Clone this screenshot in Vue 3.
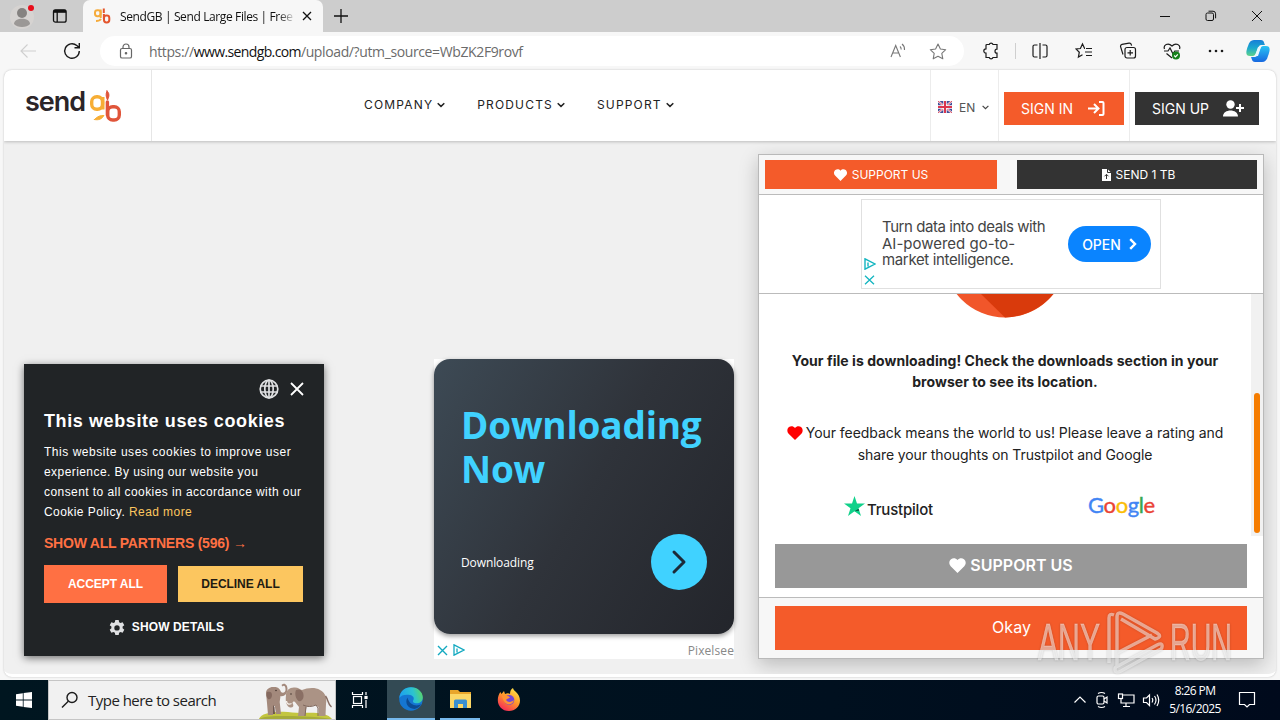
<template>
  <div class="desktop">
    <div class="titlebar">
      <div class="profile">
        <svg width="34" height="32" viewBox="0 0 34 32">
          <circle cx="16" cy="17" r="12" fill="#d6d3d1" />
          <circle cx="16" cy="13" r="5" fill="#858280" />
          <path d="M8 24c0-7 16-7 16 0-3 4-13 4-16 0z" fill="#9b9896" />
          <circle cx="25" cy="8" r="3" fill="#e80d1b" />
        </svg>
      </div>
      <svg class="tab-actions" width="16" height="16" viewBox="0 0 16 16" fill="none" stroke="#111" stroke-width="1.3">
        <rect x="1.5" y="1.8" width="12.6" height="12.4" rx="2" />
        <path d="M1.5 3.3h12.6" stroke-width="3" />
        <path d="M5.2 4v10" />
      </svg>
      <div class="tab">
        <svg width="20" height="18" viewBox="0 0 20 18" fill="none" stroke-width="2">
          <rect x="3" y="3.2" width="5.500" height="6" rx="2.400" stroke="#f5ab3c" />
          <path d="M8.700 2.500V11M4 14c2.500 0 4-.5 5-2" stroke="#f5ab3c" />
          <rect x="12" y="8.600" width="5.300" height="6.800" rx="2.400" stroke="#e4552d" />
          <path d="M11.800 1.500v4.400M11.900 7v5" stroke="#e4552d" />
        </svg>
        <span class="tab-title">SendGB | Send Large Files | Free fi</span>
        <svg class="tab-close" width="10" height="10" viewBox="0 0 10 10" stroke="#111" stroke-width="1.3"><path d="M1 1l8 8M9 1L1 9" /></svg>
      </div>
      <svg class="new-tab" width="14" height="14" viewBox="0 0 14 14" stroke="#111" stroke-width="1.3"><path d="M7 0v14M0 7h14" /></svg>
      <div class="window-buttons">
        <svg width="12" height="12" viewBox="0 0 12 12" fill="none" stroke="#111"><path d="M1 6.5h10" /></svg>
        <svg width="12" height="12" viewBox="0 0 12 12" fill="none" stroke="#111"><rect x="1" y="3" width="7.5" height="7.5" rx="1.5" /><path d="M3.5 1.2H8a2.6 2.6 0 0 1 2.6 2.6v4.5" /></svg>
        <svg width="12" height="12" viewBox="0 0 12 12" fill="none" stroke="#111"><path d="M1 1l10 10M11 1L1 11" /></svg>
      </div>
    </div>

    <div class="toolbar">
      <svg class="back" width="18" height="16" viewBox="0 0 18 16" fill="none" stroke="#cfcfcf" stroke-width="1.1"><path d="M17 8H2M8.5 1.5L2 8l6.5 6.5" /></svg>
      <svg class="reload" width="18" height="18" viewBox="0 0 18 18" fill="none" stroke="#1b1b1b" stroke-width="1.4"><path d="M16.3 9a7.3 7.3 0 1 1-2.5-5.5l2.3 2M16.3 1v4.7h-4.8" /></svg>
      <div class="address">
        <svg class="lock" width="14" height="16" viewBox="0 0 14 16" fill="none" stroke="#666" stroke-width="1.2">
          <rect x="1.5" y="5.5" width="11" height="9.5" rx="1.6" />
          <path d="M4 5.5V4a3 3 0 0 1 6 0v1.5" />
          <circle cx="7" cy="10.2" r=".7" fill="#666" />
        </svg>
        <span class="url">https://<b>www.sendgb.com</b>/upload/?utm_source=WbZK2F9rovf</span>
        <svg class="read-aloud" width="17" height="16" viewBox="0 0 17 16" fill="none" stroke="#777" stroke-width="1.1"><path d="M1 14L5.7 2.5 10.4 14M2.7 10h6M10 3.500c1 .9 1.200 1.800 1.200 3M12 1c2 1.500 2.700 3.500 2.500 6" /></svg>
        <svg class="fav" width="18" height="17" viewBox="0 0 18 17" fill="none" stroke="#777" stroke-width="1.1" stroke-linejoin="round"><path d="M9 1l2.400 5 5.300.7-3.900 3.700 1 5.400L9 13.200l-4.800 2.600 1-5.400L1.300 6.700 6.600 6z" /></svg>
      </div>
      <div class="tool-icons">
        <svg width="18" height="18" viewBox="0 0 18 18"><path d="M5 2.500h2.200a2 2 0 0 1 3.800 0H15v4.700a2 2 0 1 0 0 4v4.300h-4a2 2 0 0 1-3.800 0H4v-4.300a2.200 2.200 0 0 1 0-4.400V3.500q0-1 1-1z" /></svg>
        <i class="tool-divider"></i>
        <svg width="18" height="18" viewBox="0 0 18 18"><path d="M9 1v16M6.500 3H3.500A1.500 1.500 0 0 0 2 4.500v9A1.500 1.500 0 0 0 3.500 15h3M11.500 3h3A1.500 1.500 0 0 1 16 4.500v9a1.500 1.500 0 0 1-1.500 1.500h-3" /></svg>
        <svg width="18" height="18" viewBox="0 0 18 18"><path d="M10 6.500H9.600L7.500 2 5.400 6.500 1 7l3.300 3.200-.9 4.900 4.100-2.300M11 6.500h6M10 10h7M11 13.500h6" /></svg>
        <svg width="18" height="18" viewBox="0 0 18 18"><rect x="6" y="5.500" width="10.500" height="10.500" rx="2" /><path d="M11.200 8v5.500M8.500 10.800H14M4 12.500l-2.500-8A2 2 0 0 1 3 2.400l7-1.300a2 2 0 0 1 2.300 1.500l.3 1" /></svg>
        <svg width="18" height="18" viewBox="0 0 18 18">
          <path d="M1.500 7C0 3 5 0 9 4c4-4 9-1 7.500 3M1 9h4l2-3 3 6 1.800-3H16M3.500 11.500L9 16" />
          <circle cx="13" cy="13.500" r="4" fill="#16811b" stroke="none" />
          <path d="M11.200 13.500l1.300 1.300 2.300-2.500" stroke="#fff" />
        </svg>
        <svg width="18" height="18" viewBox="0 0 18 18"><g fill="#1b1b1b" stroke="none"><circle cx="3" cy="9" r="1.300" /><circle cx="9" cy="9" r="1.300" /><circle cx="15" cy="9" r="1.300" /></g></svg>
      </div>
      <svg class="copilot" width="26" height="24" viewBox="0 0 26 24">
        <defs>
          <linearGradient id="cp1" x1="0" y1="0" x2="0" y2="1"><stop offset="0" stop-color="#187ed8" /><stop offset=".5" stop-color="#1ba8ce" /><stop offset="1" stop-color="#5fd38a" /></linearGradient>
          <linearGradient id="cp2" x1="0" y1="0" x2="0" y2="1"><stop offset="0" stop-color="#28c4f4" /><stop offset="1" stop-color="#1768e0" /></linearGradient>
        </defs>
        <path d="M9 1h7c3 0 3 3 4 5h-4c-4 0-4 11-8 11H5c-5 0-4-5-2-10C4 3 6 1 9 1z" fill="url(#cp1)" />
        <path d="M17 23h-7c-3 0-3-3-4-5h4c4 0 4-11 8-11h3c5 0 4 5 2 10-1 4-3 6-6 6z" fill="url(#cp2)" />
        <path d="M13 8h3l-3 9h-3z" fill="#e9f8ff" />
      </svg>
    </div>

    <div class="page">
      <header class="site-nav">
        <div class="logo">
          <span>send</span>
          <svg width="34" height="36" viewBox="0 0 34 36" fill="none" stroke-width="3.400" stroke-linecap="round">
            <rect x="3.700" y="8.700" width="10.800" height="12.600" rx="5" stroke="#f7ae35" />
            <path d="M14.800 9v12.500" stroke="#f7ae35" stroke-linecap="butt" />
            <path d="M6.500 31.500c4 1 7.500-.5 9.500-4-3-.5-7 1-9.500 4z" fill="#f7ae35" stroke="#f7ae35" stroke-width="1" />
            <rect x="19.700" y="18.700" width="11.600" height="13.300" rx="5" stroke="#e0553a" />
            <path d="M19.400 14v13" stroke="#e0553a" />
            <path d="M19 3c2.500 2 2.500 5 .5 9-1.500-3-2-6-.5-9z" fill="#e0553a" stroke="#e0553a" stroke-width="1" />
          </svg>
        </div>
        <nav class="menu">
          <a v-for="item in menu" :key="item">
            <span>{{ item }}</span>
            <svg width="8" height="6" viewBox="0 0 8 6" fill="none" stroke="#222" stroke-width="1.500"><path d="M.7 1.200L4 4.400l3.300-3.200" /></svg>
          </a>
        </nav>
        <div class="lang">
          <svg class="flag" width="14" height="12" viewBox="0 0 14 12">
            <rect width="14" height="12" fill="#2d3a8c" />
            <path d="M0 0l14 12M14 0L0 12" stroke="#fff" stroke-width="2" />
            <path d="M0 0l14 12M14 0L0 12" stroke="#d8203a" stroke-width=".9" />
            <path d="M7 0v12M0 6h14" stroke="#fff" stroke-width="3.400" />
            <path d="M7 0v12M0 6h14" stroke="#d8203a" stroke-width="2" />
          </svg>
          <span>EN</span>
          <svg class="lang-caret" width="7" height="5" viewBox="0 0 7 5" fill="none" stroke="#444" stroke-width="1.200"><path d="M.6.900l2.900 2.800L6.400.9" /></svg>
        </div>
        <div class="sign in">
          <a><span>SIGN IN</span>
            <svg width="17" height="15" viewBox="0 0 17 15" fill="none" stroke="#fff" stroke-width="2"><path d="M0 7.500h10M6 3l4.500 4.500L6 12M11 1h3.500a1 1 0 0 1 1 1v11a1 1 0 0 1-1 1H11" /></svg>
          </a>
        </div>
        <div class="sign up">
          <a><span>SIGN UP</span>
            <svg width="21" height="17" viewBox="0 0 21 17" fill="#fff"><circle cx="7.500" cy="4.500" r="4.200" /><path d="M0 16.500c0-8 15-8 15 0zM16 4h2v3h3v2h-3v3h-2V9h-3V7h3z" /></svg>
          </a>
        </div>
      </header>

      <main class="stage">
        <section class="cookies">
          <div class="cookie-top">
            <svg width="20" height="20" viewBox="0 0 20 20" fill="none" stroke="#dfe0e2" stroke-width="1.700"><circle cx="10" cy="10" r="8.800" /><ellipse cx="10" cy="10" rx="4.200" ry="8.800" /><path d="M10 1v18M1.500 7h17M1.500 13h17" /></svg>
            <svg width="14" height="14" viewBox="0 0 14 14" stroke="#fff" stroke-width="1.800"><path d="M1 1l12 12M13 1L1 13" /></svg>
          </div>
          <h2>This website uses cookies</h2>
          <p>
            <span class="first">This website uses cookies to improve user</span><br />
            <span>experience. By using our website you</span><br />
            <span>consent to all cookies in accordance with our</span><br />
            <span>Cookie Policy. <a>Read more</a></span>
          </p>
          <div class="partners">SHOW ALL PARTNERS (596) <i>→</i></div>
          <div class="cookie-buttons">
            <button class="accept">ACCEPT ALL</button>
            <button class="decline">DECLINE ALL</button>
          </div>
          <div class="details">
            <svg width="16" height="16" viewBox="0 0 16 16" fill="#dfe0e2" fill-rule="evenodd"><path d="M6.300 0h3.400l.4 2.200 1.400.8 2.100-.8 1.700 3-1.700 1.400v1.700l1.700 1.500-1.700 2.900-2.100-.8-1.400.9-.4 2.200H6.300l-.4-2.200-1.400-.9-2.100.8-1.700-2.900 1.700-1.500V6.600L.7 5.200l1.700-3 2.100.8 1.400-.8zM8 5.200a2.700 2.700 0 1 0 0 5.400 2.700 2.700 0 0 0 0-5.400z" /></svg>
            <span>SHOW DETAILS</span>
          </div>
        </section>

        <section class="promo">
          <div class="promo-card">
            <h1>Downloading<br />Now</h1>
            <div class="promo-row">
              <span>Downloading</span>
              <div class="round">
                <svg width="16" height="26" viewBox="0 0 16 26" fill="none" stroke="#1c2a38" stroke-width="3" stroke-linecap="round" stroke-linejoin="round"><path d="M3 3l10 10L3 23" /></svg>
              </div>
            </div>
          </div>
          <div class="promo-foot">
            <svg width="11" height="11" viewBox="0 0 11 11" stroke="#13a9c0" stroke-width="1.400"><path d="M1 1l9 9M10 1l-9 9" /></svg>
            <svg width="12" height="12" viewBox="0 0 12 12" fill="none" stroke="#13a9c0" stroke-width="1.300"><path d="M1 .8v10.400L11 6zM4 4.500v4" /></svg>
            <span>Pixelsee</span>
          </div>
        </section>

        <section class="modal">
          <div class="modal-head">
            <button class="orange">
              <svg width="13" height="12" viewBox="0 0 24 22" fill="#fff"><path :d="heart" /></svg>
              <span>SUPPORT US</span>
            </button>
            <button class="dark">
              <svg width="9" height="12" viewBox="0 0 9 12"><path d="M0 0h5.500L9 3.500V12H0z" fill="#fff" /><path d="M5.500 0v3.500H9M4.500 10V5.500M2.500 7.300l2-2 2 2" stroke="#333" fill="none" /></svg>
              <span>SEND 1 TB</span>
            </button>
          </div>
          <div class="modal-ad">
            <div class="banner">
              <div class="ad-marks">
                <svg width="12" height="12" viewBox="0 0 12 12" fill="none" stroke="#13b5c0" stroke-width="1.400"><path d="M1 .8v10.400L11 6zM4 4.500v4" /></svg>
                <svg width="11" height="10" viewBox="0 0 11 10" stroke="#13b5c0" stroke-width="1.300"><path d="M1 .8l9 8.500M10 .8L1 9.300" /></svg>
              </div>
              <p><span class="tight">Turn data into deals with</span><br /><span class="loose">AI-powered go-to-</span><br /><span>market intelligence.</span></p>
              <div class="open">
                <span>OPEN</span>
                <svg width="8" height="12" viewBox="0 0 8 12" fill="none" stroke="#fff" stroke-width="2.400"><path d="M1.200 1.200L6 6l-4.800 4.800" /></svg>
              </div>
            </div>
          </div>
          <div class="modal-body">
            <div class="scroll-content">
              <svg class="disc" width="124" height="24" viewBox="0 0 124 24">
                <circle cx="62" cy="-38" r="61.500" fill="#f1562a" />
                <path d="M38 0h72.500Q92 22 62 23.500z" fill="#d93a0c" />
              </svg>
              <p class="strong"><span>Your file is downloading! Check the downloads section in your</span><br /><span>browser to see its location.</span></p>
              <p class="feedback">
                <svg width="16" height="14" viewBox="0 0 24 22" fill="#f00"><path :d="heart" /></svg>
                <span>Your feedback means the world to us! Please leave a rating and</span><br /><span class="second">share your thoughts on Trustpilot and Google</span>
              </p>
              <div class="reviews">
                <div class="trustpilot">
                  <svg width="21" height="20" viewBox="0 0 21 20"><path d="M10.500 0L13 7.500h8l-6.500 4.700L17 20l-6.500-4.800L4 20l2.500-7.800L0 7.500h8z" fill="#10d18a" /><path d="M14.500 12.800l.7 2-4.700.4z" fill="#0a5a43" /></svg>
                  <span>Trustpilot</span>
                </div>
                <div class="google"><span v-for="(l, i) in google" :key="i" :class="l.tone">{{ l.ch }}</span></div>
              </div>
            </div>
            <div class="track"><div class="thumb"></div></div>
          </div>
          <div class="modal-support">
            <button>
              <svg width="17" height="15" viewBox="0 0 24 22" fill="#fff"><path :d="heart" /></svg>
              <span>SUPPORT US</span>
            </button>
          </div>
          <div class="modal-foot"><button>Okay</button></div>
        </section>
      </main>
    </div>

    <footer class="taskbar">
      <div class="start">
        <svg width="16" height="16" viewBox="0 0 16 16" fill="#fff"><path d="M0 2.200l6.800-1v6.400H0zM7.600 1.100L16 0v7.600H7.600zM0 8.400h6.800v6.400l-6.800-1zM7.600 8.400H16V16l-8.400-1.100z" /></svg>
      </div>
      <div class="search">
        <svg width="18" height="18" viewBox="0 0 18 18" fill="none" stroke="#1b1b1b" stroke-width="1.400"><circle cx="11" cy="6.500" r="5" /><path d="M7.300 10.200L1 16.500" /></svg>
        <span>Type here to search</span>
        <svg class="elephants" width="78" height="38" viewBox="0 0 78 38">
          <path d="M2 38c2-5 10-7 20-7 8-1 14 1 22 1 14-1 27 0 31 6z" fill="#c3c640" />
          <path d="M2 38c6-3 14-3 24-3s30 0 49 3z" fill="#a5ab3a" />
          <path d="M9 12c0-4 4-6.500 8-6 4-.3 6 2 7 5 2 2 5 0 4.500-3C28.300 5 27 4 25.500 5.500L24.500 4c3-3 6 0 6 4 0 5-3.500 8-7 7l-.8 6 1.300 12h-5l-1.200-8h-1.300l-.5 9h-5L10 22z" fill="#a3897c" />
          <path d="M10 11c3-1 5 0 5 3 0 3-2 5-4 4-2-2-2-5-1-7z" fill="#84695f" />
          <path d="M16 24l1.500 2 .5 7h-2z" fill="#6d574f" />
          <path d="M29 14c0-5 4-8 9-7.500 3 0 5 2 7 2.500 5-2 13-3 18 0 6 3 7 9 6 14l-.5 12H62l-.5-9-3-2c-3 1-6 2-9 1.500L48 35h-7l1-9-4-5c-2-1-3 0-2 2 1 2 0 4-3 3.500-3-1-5-5-4-12.500z" fill="#ab9385" />
          <path d="M39 9c5-2 8 2 7.500 7-.5 3-3 5-5 4-3-2-4-8-2.500-11z" fill="#8a6f64" />
          <path d="M46 24c4 2 9 2 13 0l2 3v8M49 26l-1 9" stroke="#80685d" stroke-width="1" fill="none" />
          <path d="M68.500 15c3 4 2 8 6 11" stroke="#84695f" stroke-width="1.400" fill="none" />
          <path d="M29.500 20c0 3 2.500 4 5 2.500" stroke="#f6f1ec" stroke-width="1.300" fill="none" />
          <circle cx="19" cy="9.500" r=".7" fill="#33241f" />
          <circle cx="34" cy="13" r=".7" fill="#33241f" />
        </svg>
      </div>
      <div class="task view">
        <svg width="18" height="18" viewBox="0 0 18 18" fill="none" stroke="#fff" stroke-width="1.200"><rect x="2.500" y="5.500" width="8" height="7" /><path d="M1.500 1v2.500h10V1M1.500 17v-2.500h10V17M15 1v3M15 9v8" /><rect x="14" y="5.500" width="2" height="2" fill="#fff" /></svg>
      </div>
      <div class="task active">
        <svg width="24" height="24" viewBox="0 0 24 24">
          <defs>
            <linearGradient id="eg" x1="0" y1=".5" x2="1" y2=".3"><stop offset="0" stop-color="#1c9ff0" /><stop offset=".6" stop-color="#2cc3d0" /><stop offset="1" stop-color="#5cd662" /></linearGradient>
          </defs>
          <circle cx="12" cy="12" r="11.800" fill="#1576d2" />
          <path d="M.3 11C1 4 6 .2 12 .2c7 0 11.800 5 11.800 10 0 4-3 6-6 6-3.500 0-4.500-1.500-3.500-3 .8-1.200 1-4-3-5.200C6.500 7 2 8 .3 11z" fill="url(#eg)" />
          <path d="M8.500 10.500c-3 5 0 11 7 11.500 3-.5 5.500-2.500 6.800-4.700-5 2.500-12 1-13.800-6.800z" fill="#0c4b93" />
        </svg>
      </div>
      <div class="task open-app">
        <svg width="23" height="20" viewBox="0 0 23 20"><path d="M1 1h8l2 2h11v16H1z" fill="#e9a62b" /><path d="M1 5h21v14H1z" fill="#fcd766" /><path d="M5 19v-7q0-1.500 1.500-1.500h10q1.500 0 1.500 1.500v7h-4v-4H9v4z" fill="#3a8fd0" /></svg>
      </div>
      <div class="task">
        <svg width="24" height="24" viewBox="0 0 24 24">
          <defs><linearGradient id="ff" x1=".8" y1="0" x2=".2" y2="1"><stop offset="0" stop-color="#ffe64a" /><stop offset=".45" stop-color="#ff9a2a" /><stop offset="1" stop-color="#f5215b" /></linearGradient></defs>
          <path d="M12 23C5 23 .8 18 .8 12c0-3 1-6 2.500-8L4.500 6 7 3l1 3c2-1 4-1 5 0 0-3 1-5 3-6 0 3 7 5 7 12.500C23 18.500 18 23 12 23z" fill="url(#ff)" />
          <circle cx="12.300" cy="12" r="5" fill="#7446d5" />
          <path d="M5 8c3-1 7-.5 8 2-2 0-3 1-4 2 2 3 6 2 8 0-1 6-10 7-12-4z" fill="#ff9334" />
        </svg>
      </div>
      <div class="tray">
        <svg width="14" height="20" viewBox="0 0 14 20"><path d="M1.500 12.500L7 7l5.500 5.500" /></svg>
        <svg width="16" height="20" viewBox="0 0 14 20"><rect x="2" y="6" width="7" height="8" rx="1.500" /><path d="M9 9l3-2v6l-3-2M3 3.500q3.500-2 7 0M3 16.500q3.500 2 7 0" /></svg>
        <svg width="18" height="20" viewBox="0 0 18 20"><path d="M6 5h11v8H4V9M9 13v3M6 16.500h7" /><rect x="1.500" y="4" width="4" height="4.500" /></svg>
        <svg width="18" height="20" viewBox="0 0 18 20"><path d="M1.500 8v4.500h3l3 3V5l-3 3zM10 8q1.500 2 0 4.500M12.500 6q3 4 0 8.500M15 4.500q3.500 5.500 0 11.500" /></svg>
        <div class="clock"><span>8:26 PM</span><span>5/16/2025</span></div>
        <svg class="notice" width="18" height="20" viewBox="0 0 18 20"><path d="M1.500 2.500h15v12h-5L9 17l-2.500-2.500h-5z" /></svg>
      </div>
    </footer>

    <svg class="watermark" width="200" height="68" viewBox="0 0 200 68">
      <g class="wm-text">
        <text x="4" y="52" textLength="62" lengthAdjust="spacingAndGlyphs">ANY</text>
        <text x="136" y="52" textLength="62" lengthAdjust="spacingAndGlyphs">RUN</text>
      </g>
      <g class="wm-mark">
        <path d="M80 7q-5-2-5 3v45" />
        <path d="M83 59V9q0-6 6-3l34 19q6 4-2 6L87 11M83 45l35-18M87 63q-6 3-6-2 0-2 3-3l39-21q6-3 5 2 0 2-3 3z" />
      </g>
    </svg>
  </div>
</template>

<script setup>
const menu = ['COMPANY', 'PRODUCTS', 'SUPPORT']

const google = [
  { ch: 'G', tone: 'blue' },
  { ch: 'o', tone: 'red' },
  { ch: 'o', tone: 'yellow' },
  { ch: 'g', tone: 'blue' },
  { ch: 'l', tone: 'green' },
  { ch: 'e', tone: 'red' }
]

const heart = 'M12 22L2 12C-1 9-.5 4 2.500 1.700 5.500-.5 9.500 0 12 3c2.500-3 6.500-3.500 9.500-1.300C24.500 4 25 9 22 12z'
</script>

<style>
body {
  overflow: hidden;
}
</style>

<style scoped>
.desktop {
  position: relative;
  width: 1280px;
  height: 720px;
  display: flex;
  flex-direction: column;
  overflow: hidden;
  background: #f7f7f7;
  font-family: Inter, sans-serif;
  color: #222;
}

.desktop *,
.desktop {
  box-sizing: border-box;
}

svg {
  flex: none;
  display: block;
}

button {
  border: 0;
  padding: 0;
  font-family: inherit;
  display: flex;
  align-items: center;
  justify-content: center;
  white-space: nowrap;
}

p,
h1,
h2 {
  margin: 0;
  white-space: nowrap;
}

/* browser chrome */
.titlebar {
  flex: none;
  height: 32px;
  display: flex;
  align-items: center;
  background: #cdcdcd;
}

.profile {
  width: 52px;
  padding-left: 6px;
}

.tab-actions {
  margin-right: 15px;
}

.tab {
  width: 240px;
  height: 32px;
  display: flex;
  align-items: center;
  padding: 0 11px 0 9px;
  background: #f7f7f7;
  border-radius: 7px 7px 0 0;
}

.tab-title {
  width: 176px;
  margin-left: 8px;
  overflow: hidden;
  white-space: nowrap;
  font: 12px 'Open Sans', sans-serif;
  letter-spacing: -0.38px;
  color: #111;
  -webkit-mask-image: linear-gradient(90deg, #000 90%, transparent);
  mask-image: linear-gradient(90deg, #000 90%, transparent);
}

.tab-close {
  margin-left: 6px;
}

.new-tab {
  margin-left: 11px;
}

.window-buttons {
  margin-left: auto;
  display: flex;
  gap: 34px;
  padding-right: 17px;
}

.toolbar {
  flex: none;
  height: 38px;
  display: flex;
  align-items: center;
}

.back {
  margin-left: 19px;
}

.reload {
  margin-left: 26px;
}

.address {
  width: 864px;
  height: 30px;
  margin-left: 19px;
  display: flex;
  align-items: center;
  padding: 0 17px 0 19px;
  border-radius: 15px;
  background: #fff;
}

.url {
  margin-left: 16px;
  font: 14px 'Open Sans', sans-serif;
  letter-spacing: -0.38px;
  color: #6b6b6b;
}

.url b {
  font-weight: 400;
  letter-spacing: -0.62px;
  color: #111;
}

.read-aloud {
  margin-left: auto;
  margin-right: 22px;
}

.tool-icons {
  margin-left: 18px;
  display: flex;
  align-items: center;
  gap: 26px;
}

.tool-icons svg {
  fill: none;
  stroke: #1b1b1b;
  stroke-width: 1.2;
}

.tool-divider {
  width: 1px;
  height: 16px;
  margin: 0 -11px;
  background: #cfcfcf;
}

.copilot {
  margin-left: 20px;
}

.page {
  flex: none;
  width: 1272px;
  height: 607px;
  margin-left: 4px;
  display: flex;
  flex-direction: column;
  overflow: hidden;
  background: #f0f0f0;
  border-radius: 8px;
  border-bottom: 3px solid #fff;
  box-shadow: 0 0 2px #bbb;
}

/* site navigation */
.site-nav {
  flex: none;
  height: 71px;
  display: flex;
  background: #fff;
  box-shadow: 0 1px 3px rgba(0, 0, 0, 0.22);
}

.logo {
  width: 148px;
  display: flex;
  align-items: center;
  padding-left: 21px;
  border-right: 1px solid #e6e6e6;
}

.logo span {
  width: 63px;
  margin-top: -8px;
  font: 600 27px Inter, sans-serif;
  letter-spacing: -1px;
  color: #2b2528;
}

.menu {
  flex: 1;
  display: flex;
  justify-content: flex-start;
  gap: 32px;
  padding: 28px 0 0 212px;
  font-size: 12px;
  line-height: 14px;
}

.menu a {
  display: flex;
  gap: 4px;
  letter-spacing: 1.17px;
}

.menu svg {
  margin-top: 4px;
}

.lang {
  width: 69px;
  display: flex;
  align-items: center;
  gap: 7px;
  padding: 4px 0 0 7px;
  border-left: 1px solid #ececec;
  border-right: 1px solid #ececec;
  font-size: 12px;
  color: #555;
}

.flag {
  margin-top: -2px;
  opacity: 0.9;
}

.sign {
  width: 131px;
  padding: 22px 0 0 5px;
  border-right: 1px solid #ececec;
}

.sign.up {
  width: 146px;
  border: 0;
}

.sign a {
  width: 120px;
  height: 33px;
  display: flex;
  align-items: center;
  justify-content: space-between;
  padding: 0 19px 0 17px;
  background: #f45b2a;
  color: #fff;
  font-size: 14px;
}

.sign.up a {
  width: 124px;
  padding: 0 15px 0 17px;
  background: #333;
}

/* cookie panel */
.stage {
  flex: 1;
  display: flex;
  align-items: flex-start;
}

.cookies {
  width: 300px;
  height: 292px;
  margin: 223px 0 0 20px;
  padding: 15px 20px 0;
  background: #212426;
  box-shadow: 0 2px 8px rgba(0, 0, 0, 0.55);
  font-family: 'Liberation Sans', Arial, sans-serif;
  color: #fff;
}

.cookie-top {
  height: 20px;
  display: flex;
  align-items: center;
  justify-content: flex-end;
  gap: 11px;
}

.cookies h2 {
  margin-top: 11px;
  font-size: 18px;
  line-height: 22px;
  letter-spacing: 0.6px;
}

.cookies p {
  margin-top: 10px;
  font-size: 12px;
  line-height: 20px;
  letter-spacing: 0.43px;
}

.cookies p .first {
  letter-spacing: 0.53px;
}

.cookies p a {
  color: #fcc65f;
}

.partners {
  margin-top: 11px;
  font-size: 14px;
  font-weight: 700;
  line-height: 20px;
  letter-spacing: -0.22px;
  white-space: nowrap;
  color: #ff7043;
}

.partners i {
  font-style: normal;
  font-weight: 400;
}

.cookie-buttons {
  margin-top: 12px;
  display: flex;
  align-items: center;
  gap: 11px;
}

.cookie-buttons button {
  font-size: 12px;
  font-weight: 700;
  letter-spacing: -0.05px;
}

.accept {
  width: 123px;
  height: 38px;
  background: #ff7043;
  color: #fff;
}

.decline {
  width: 125px;
  height: 36px;
  background: #fcc65f;
  color: #221b12;
}

.details {
  margin-top: 15px;
  display: flex;
  align-items: center;
  justify-content: center;
  gap: 7px;
  padding: 1px 15px 0 0;
  font-size: 12px;
  font-weight: 700;
  letter-spacing: 0.1px;
  line-height: 17px;
}

/* middle ad */
.promo {
  width: 300px;
  height: 300px;
  margin: 218px 0 0 110px;
  background: #fff;
}

.promo-card {
  height: 275px;
  padding: 44px 27px 0;
  border-radius: 16px;
  background: linear-gradient(120deg, #3d4a55 0%, #2f333a 50%, #23252b 100%);
  box-shadow: 0 2px 5px rgba(0, 0, 0, 0.4);
  font-family: 'Open Sans', sans-serif;
  color: #fff;
}

.promo h1 {
  font-size: 37px;
  line-height: 44px;
  letter-spacing: -0.2px;
  color: #40d2ff;
}

.promo-row {
  margin-top: 43px;
  display: flex;
  align-items: center;
  justify-content: space-between;
  font-size: 12px;
  letter-spacing: -0.1px;
}

.round {
  width: 56px;
  height: 56px;
  display: flex;
  align-items: center;
  justify-content: center;
  border-radius: 50%;
  background: #40d2ff;
}

.promo-foot {
  height: 25px;
  display: flex;
  align-items: center;
  gap: 5px;
  padding: 7px 0 0 3px;
  font: 12px 'Open Sans', sans-serif;
  letter-spacing: 0.1px;
  color: #888;
}

.promo-foot span {
  margin-left: auto;
}

/* download dialog */
.modal {
  width: 506px;
  height: 505px;
  margin: 13px 0 0 24px;
  display: flex;
  flex-direction: column;
  border: 1px solid #b9b9b9;
  background: #fff;
  box-shadow: 0 6px 18px rgba(0, 0, 0, 0.22);
}

.modal-head {
  height: 40px;
  display: flex;
  gap: 20px;
  padding: 5px 6px;
  background: #f7f7f7;
  border-bottom: 1px solid #bbb;
}

.modal-head button {
  height: 29px;
  gap: 5px;
  font-size: 12px;
  color: #fff;
}

.modal-head .orange {
  width: 232px;
  background: #f45b2a;
}

.modal-head .dark {
  width: 240px;
  padding-left: 3px;
  background: #333;
}

.modal-ad {
  height: 99px;
  display: flex;
  justify-content: center;
  padding-top: 4px;
  border-bottom: 1px solid #bbb;
}

.banner {
  width: 300px;
  height: 90px;
  display: flex;
  align-items: center;
  border: 1px solid #e0e0e0;
}

.ad-marks {
  width: 20px;
  align-self: flex-end;
  display: flex;
  flex-direction: column;
  gap: 5px;
  padding: 0 0 3px 2px;
}

.banner p {
  width: 186px;
  font-size: 15px;
  line-height: 16.5px;
  letter-spacing: -0.35px;
  color: #444;
}

.banner .tight {
  letter-spacing: -0.44px;
}

.banner .loose {
  letter-spacing: 0;
}

.open {
  width: 83px;
  height: 36px;
  display: flex;
  align-items: center;
  justify-content: center;
  gap: 8px;
  border-radius: 18px;
  background: #0a84ff;
  color: #fff;
  font-size: 14px;
  font-weight: 500;
}

.modal-body {
  height: 242px;
  display: flex;
}

.scroll-content {
  flex: 1;
  display: flex;
  flex-direction: column;
  align-items: center;
  text-align: center;
}

.track {
  width: 12px;
  padding: 99px 3px 3px;
  background: #f1f1f1;
}

.thumb {
  height: 140px;
  border-radius: 3px;
  background: #f57c00;
}

.strong {
  margin-top: 32px;
  font-size: 14px;
  font-weight: 700;
  line-height: 21px;
  letter-spacing: 0.05px;
}

.feedback {
  margin-top: 30px;
  font-size: 14px;
  line-height: 22px;
  letter-spacing: -0.04px;
}

.feedback .second {
  letter-spacing: -0.1px;
}

.feedback svg {
  display: inline-block;
  margin-right: 3px;
  vertical-align: -2px;
}

.reviews {
  width: 100%;
  display: flex;
  align-items: flex-start;
  padding: 30px 0 0 85px;
}

.trustpilot {
  width: 244px;
  display: flex;
  gap: 2px;
  font: 500 15px Inter, sans-serif;
  letter-spacing: -0.2px;
}

.trustpilot span {
  padding-top: 4px;
}

.google {
  margin-top: -3px;
  font: 22px/24px Lato, sans-serif;
  letter-spacing: -0.4px;
  -webkit-text-stroke: 0.4px;
}

.blue {
  color: #4285f4;
}

.red {
  color: #ea4335;
}

.yellow {
  color: #fbbc05;
}

.green {
  color: #34a853;
}

.modal-support {
  height: 62px;
  padding: 8px 16px;
  border-bottom: 1px solid #bbb;
}

.modal-support button {
  width: 472px;
  height: 44px;
  gap: 4px;
  padding-bottom: 2px;
  background: #989898;
  color: #fff;
  font-size: 16px;
  font-weight: 600;
}

.modal-foot {
  flex: 1;
  padding: 8px 16px;
  background: #f7f7f7;
}

.modal-foot button {
  width: 472px;
  height: 44px;
  padding: 0 0 2px 1px;
  background: #f45b2a;
  color: #fff;
  font-size: 16px;
}

/* windows taskbar */
.taskbar {
  flex: none;
  height: 40px;
  margin-top: 3px;
  display: flex;
  background: linear-gradient(90deg, #001620, #00101f 65%, #000a1c);
  color: #fff;
  font-family: 'Open Sans', sans-serif;
}

.start,
.task {
  width: 48px;
  display: flex;
  align-items: center;
  justify-content: center;
}

.task {
  margin-right: 1px;
}

.task.view {
  margin-right: 3px;
}

.task.active {
  background: #334a54;
  border-bottom: 2px solid #76b9ed;
}

.task.open-app {
  width: 40px;
  margin: 0 5px 0 4px;
  border-bottom: 2px solid #76b9ed;
}

.search {
  width: 288px;
  height: 40px;
  display: flex;
  align-items: center;
  padding-left: 12px;
  background: #f1f1f1;
  border: 1px solid #c5c5c5;
  color: #222;
  font-size: 15px;
  letter-spacing: -0.52px;
}

.search span {
  margin-left: 9px;
}

.elephants {
  margin-left: auto;
}

.tray {
  margin-left: auto;
  display: flex;
  align-items: center;
  padding-right: 24px;
}

.tray svg {
  fill: none;
  stroke: #fff;
  stroke-width: 1.2;
  margin-right: 7px;
}

.clock {
  width: 56px;
  display: flex;
  flex-direction: column;
  align-items: center;
  font-size: 12px;
  line-height: 18px;
  letter-spacing: -0.6px;
}

.tray .notice {
  margin: 0 0 0 15px;
}

/* floating recorder mark */
.watermark {
  position: absolute;
  left: 1034px;
  top: 608px;
}

.wm-text {
  fill: rgba(255, 255, 255, 0.5);
  stroke: rgba(255, 255, 255, 0.3);
  stroke-width: 0.8;
  font: 52px 'Liberation Sans', sans-serif;
  filter: drop-shadow(0 0 1px rgba(0, 0, 0, 0.35));
}

.wm-mark {
  fill: none;
  stroke: rgba(255, 255, 255, 0.5);
  stroke-width: 3.4;
  stroke-linejoin: round;
  filter: drop-shadow(0 0 1px rgba(0, 0, 0, 0.35));
}
</style>
